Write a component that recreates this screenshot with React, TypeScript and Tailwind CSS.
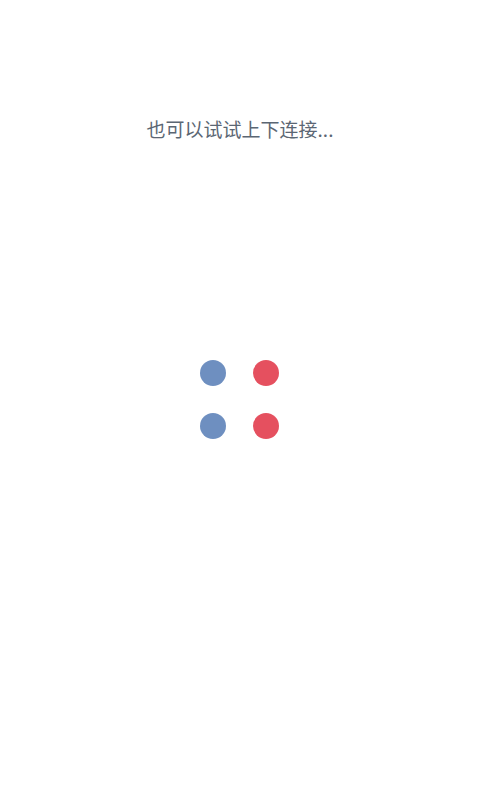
export default function App() {
  return (
    <div
      className="w-[480px] h-[800px] bg-white flex flex-col items-center"
      style={{ fontFamily: '"Noto Sans CJK SC", "Noto Sans", sans-serif' }}
    >
      <p className="mt-[115px] text-[19px] leading-[28px] text-[#5b6673]">也可以试试上下连接...</p>
      <div className="mt-[217px] grid grid-cols-2 gap-[27px] pr-px">
        <span className="w-[26px] h-[26px] rounded-full bg-[#6e8fc0]" />
        <span className="w-[26px] h-[26px] rounded-full bg-[#e5505f]" />
        <span className="w-[26px] h-[26px] rounded-full bg-[#6e8fc0]" />
        <span className="w-[26px] h-[26px] rounded-full bg-[#e5505f]" />
      </div>
    </div>
  );
}
